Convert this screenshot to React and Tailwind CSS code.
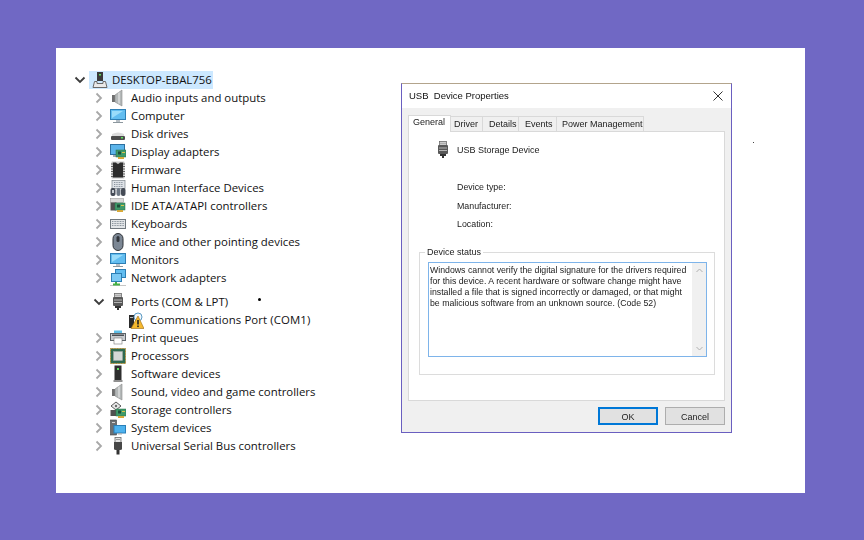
import React from 'react';

// little 16x16 device manager icons
const Speaker = () => (
  <svg width="16" height="18" viewBox="0 0 16 18">
    <rect x="2" y="6" width="3" height="7" fill="#6f6f6f" />
    <path d="M5 6 L12 1 V17 L5 13 Z" fill="#b4b8b8" stroke="#8a8a8a" strokeWidth="0.6" />
    <path d="M9 3.5 V14.5" stroke="#dcdede" strokeWidth="1.5" />
  </svg>
);
const Screen = () => (
  <svg width="16" height="18" viewBox="0 0 16 18">
    <rect x="0.5" y="2.5" width="15" height="10" fill="#62bdf0" stroke="#2d7fb5" />
    <path d="M2 4 H13 L2 11 Z" fill="#9adcfa" />
    <rect x="6" y="13" width="4" height="2" fill="#b8bfc5" />
    <rect x="3" y="15" width="10" height="1" fill="#8c979e" />
  </svg>
);
const Disk = () => (
  <svg width="16" height="18" viewBox="0 0 16 18">
    <path d="M2 9 Q8 6 14 9 V11 H2 Z" fill="#dcdcdc" />
    <rect x="1" y="11" width="14" height="4" rx="1" fill="#4c4c4c" />
    <rect x="11" y="12" width="2" height="1.5" fill="#5fe05f" />
  </svg>
);
const Board = ({ x = 5, y = 8 }) => (
  <g>
    <rect x={x} y={y} width="10" height="7" fill="#3f9a6a" stroke="#2a6f4a" strokeWidth="0.5" />
    <rect x={x + 2} y={y + 1.5} width="3" height="3" fill="#1d4d38" />
    <rect x={x + 6} y={y + 2} width="3" height="1" fill="#d9c24a" />
    <rect x={x + 2} y={y + 7} width="6" height="2" fill="#d7a93a" />
  </g>
);
const DisplayAdapter = () => (
  <svg width="16" height="18" viewBox="0 0 16 18">
    <rect x="0.5" y="1.5" width="14" height="10" fill="#5bb4ea" stroke="#2d6f9f" />
    <rect x="3" y="12" width="5" height="2" fill="#a5adb3" />
    <Board x={6} y={7} />
  </svg>
);
const Chip = () => (
  <svg width="16" height="18" viewBox="0 0 16 18">
    <rect x="2" y="1" width="12" height="16" fill="#e6e6e6" stroke="#8f8f8f" strokeWidth="0.5" />
    <path d="M3 1.5 H6 Q8 4 10 1.5 H13 V16.5 H3 Z" fill="#2c2c2c" />
    <path d="M1 3 H3 M1 5.5 H3 M1 8 H3 M1 10.5 H3 M1 13 H3 M1 15.5 H3 M13 3 H15 M13 5.5 H15 M13 8 H15 M13 10.5 H15 M13 13 H15 M13 15.5 H15" stroke="#555" strokeWidth="0.9" />
  </svg>
);
const Hid = () => (
  <svg width="16" height="18" viewBox="0 0 16 18">
    <rect x="2" y="1.5" width="13" height="8" fill="#dfe3e8" stroke="#7d858c" strokeWidth="0.7" />
    <path d="M4 3.5 H13 M4 5.5 H13 M4 7.5 H13" stroke="#7f8a95" strokeWidth="0.9" strokeDasharray="1 0.7" />
    <rect x="0.5" y="9" width="5" height="8" rx="2" fill="#454b56" />
    <rect x="6.5" y="9" width="4" height="8" rx="2" fill="#6d7784" />
    <rect x="11" y="9" width="4.5" height="8" rx="2" fill="#454b56" />
    <rect x="2" y="11" width="2" height="3" fill="#c7ccd2" />
  </svg>
);
const Ide = () => (
  <svg width="16" height="18" viewBox="0 0 16 18">
    <rect x="0.5" y="1.5" width="13" height="4" fill="#d8d8d8" stroke="#8b8b8b" strokeWidth="0.5" />
    <rect x="0.5" y="5.5" width="6" height="8" fill="#505050" />
    <Board x={5} y={6} />
  </svg>
);
const Keyboard = () => (
  <svg width="16" height="18" viewBox="0 0 16 18">
    <rect x="0.5" y="4.5" width="15" height="9" fill="#e2e5e8" stroke="#70787f" />
    <path d="M2 6.5 H14 M2 8.5 H14 M2 10.5 H14" stroke="#8a949d" strokeWidth="1" strokeDasharray="1 0.6" />
  </svg>
);
const Mouse = () => (
  <svg width="16" height="18" viewBox="0 0 16 18">
    <rect x="3" y="0.5" width="10" height="17" rx="5" fill="#7c8794" stroke="#2f3338" />
    <rect x="6.5" y="3" width="3" height="6" rx="1.5" fill="#30353b" />
  </svg>
);
const Network = () => (
  <svg width="16" height="18" viewBox="0 0 16 18">
    <rect x="5.5" y="0.5" width="10" height="8" fill="#62bdf0" stroke="#2d7fb5" />
    <rect x="1.5" y="4.5" width="10" height="8" fill="#7cc9f4" stroke="#2d7fb5" />
    <path d="M6 13 V15" stroke="#45b045" strokeWidth="2" />
    <path d="M0 16.5 H16" stroke="#c6c6c6" strokeWidth="1" />
    <path d="M3 15.5 H10" stroke="#45b045" strokeWidth="2" />
  </svg>
);
const Port = () => (
  <svg width="16" height="18" viewBox="0 0 16 18">
    <rect x="4.5" y="0.5" width="7" height="4" fill="#e8e8e8" stroke="#6a6a6a" strokeWidth="0.8" />
    <path d="M6 1.5 V3.5 M8 1.5 V3.5 M10 1.5 V3.5" stroke="#777" />
    <rect x="3" y="4" width="10" height="9" rx="1" fill="#585858" />
    <path d="M4 7 H12 M4 9.5 H12" stroke="#b5b5b5" />
    <rect x="5" y="13" width="6" height="2" fill="#333" />
    <rect x="7" y="15" width="2" height="2" fill="#333" />
  </svg>
);
const WarnPort = () => (
  <svg width="16" height="18" viewBox="0 0 16 18">
    <rect x="1" y="4" width="5" height="13" fill="#2b2b2b" />
    <rect x="2" y="6" width="3" height="1" fill="#b8b8b8" />
    <circle cx="10" cy="6" r="4" fill="#f4f8fb" stroke="#5b9ac4" />
    <path d="M10 5 L3 17.5 H16 Z" fill="#f5b82e" stroke="#9c6a12" strokeWidth="0.6" />
    <rect x="9.2" y="9" width="1.6" height="4.5" fill="#222" />
    <rect x="9.2" y="14.5" width="1.6" height="1.6" fill="#222" />
  </svg>
);
const Printer = () => (
  <svg width="16" height="18" viewBox="0 0 16 18">
    <rect x="4" y="1.5" width="8" height="3" fill="#5fc0e8" />
    <rect x="0.5" y="4.5" width="15" height="7" fill="#c8ccd0" stroke="#5d6368" />
    <rect x="2" y="5.5" width="12" height="1.5" fill="#4a4f54" />
    <rect x="4" y="9" width="8" height="6" fill="#fff" stroke="#777" strokeWidth="0.6" />
  </svg>
);
const Cpu = () => (
  <svg width="16" height="18" viewBox="0 0 16 18">
    <rect x="0.5" y="1.5" width="15" height="15" fill="#2f6a50" stroke="#b68a2a" strokeDasharray="1 0.6" />
    <rect x="3.5" y="4.5" width="9" height="9" fill="#d5d8d6" stroke="#a7aaa8" strokeWidth="0.5" />
  </svg>
);
const Tower = () => (
  <svg width="16" height="18" viewBox="0 0 16 18">
    <rect x="4.5" y="0.5" width="7" height="14.5" fill="#2e2e2e" />
    <rect x="7" y="3" width="2" height="2" fill="#5ee05e" />
    <rect x="3.5" y="15" width="9" height="2" fill="#8f8f8f" />
  </svg>
);
const StorageCtl = () => (
  <svg width="16" height="18" viewBox="0 0 16 18">
    <path d="M6 1 L11 5 L6 9 L1 5 Z" fill="#e8e8e8" stroke="#4a4a4a" strokeWidth="0.9" />
    <circle cx="6" cy="5" r="1.2" fill="#6a6a6a" />
    <rect x="0.5" y="9" width="8" height="6" fill="#505050" />
    <Board x={6} y={8} />
  </svg>
);
const SystemDev = () => (
  <svg width="16" height="18" viewBox="0 0 16 18">
    <rect x="0.5" y="1" width="6" height="15" fill="#6c6f72" stroke="#3d3f41" strokeWidth="0.6" />
    <rect x="2" y="3" width="3" height="1" fill="#d2d2d2" />
    <rect x="4" y="6.5" width="11.5" height="7.5" fill="#4db2ee" stroke="#2a7fb8" />
    <rect x="8" y="14" width="4" height="1.5" fill="#a9b2b8" />
  </svg>
);
const UsbPlug = () => (
  <svg width="16" height="18" viewBox="0 0 16 18">
    <rect x="5" y="0.5" width="6" height="5" fill="#e3e3e3" stroke="#6a6a6a" strokeWidth="0.8" />
    <rect x="6.5" y="2" width="1" height="1" fill="#555" />
    <rect x="8.5" y="2" width="1" height="1" fill="#555" />
    <path d="M4 5 H12 V12 Q12 13 10 13 H6 Q4 13 4 12 Z" fill="#474747" />
    <rect x="6.5" y="13" width="3" height="4.5" fill="#333" />
  </svg>
);
const Desktop = () => (
  <svg width="16" height="18" viewBox="0 0 16 18">
    <rect x="5" y="1" width="6" height="9" fill="#3a3a3a" />
    <rect x="7" y="3" width="2" height="1.5" fill="#5ee05e" />
    <path d="M2.5 10.5 H5 V12.5 H11 V10.5 H13.5 L15 16.5 H1 Z" fill="#e9e9e9" stroke="#6a6a6a" />
  </svg>
);

const Chevron = ({ open }) =>
  open ? (
    <svg width="12" height="12" viewBox="0 0 12 12" fill="none"><path d="M1.5 3.5 L6 8 L10.5 3.5" stroke="#3c3c3c" strokeWidth="1.8" /></svg>
  ) : (
    <svg width="12" height="12" viewBox="0 0 12 12" fill="none"><path d="M3.5 1.5 L8 6 L3.5 10.5" stroke="#a8a8a8" strokeWidth="1.8" /></svg>
  );

const rows = [
  ['Audio inputs and outputs', Speaker],
  ['Computer', Screen],
  ['Disk drives', Disk],
  ['Display adapters', DisplayAdapter],
  ['Firmware', Chip],
  ['Human Interface Devices', Hid],
  ['IDE ATA/ATAPI controllers', Ide],
  ['Keyboards', Keyboard],
  ['Mice and other pointing devices', Mouse],
  ['Monitors', Screen],
  ['Network adapters', Network],
];
const rowsAfter = [
  ['Print queues', Printer],
  ['Processors', Cpu],
  ['Software devices', Tower],
  ['Sound, video and game controllers', Speaker],
  ['Storage controllers', StorageCtl],
  ['System devices', SystemDev],
  ['Universal Serial Bus controllers', UsbPlug],
];

function TreeRow({ label, Icon, open }) {
  return (
    <div className="flex items-center h-[18px] pl-[34px]">
      <span className="w-[18px] flex justify-center shrink-0"><Chevron open={open} /></span>
      <span className="w-[16px] ml-[2px] shrink-0 flex"><Icon /></span>
      <span className="ml-[5px] whitespace-nowrap">{label}</span>
    </div>
  );
}

function Tree() {
  return (
    <div className="w-[345px] shrink-0 pt-[23px] text-[#111] text-[11.4px] font-['Open_Sans',sans-serif]">
      <div className="flex items-center h-[18px] pl-[18px]">
        <span className="w-[12px] flex justify-center shrink-0"><Chevron open /></span>
        <span className="ml-[3px] flex items-center h-[18px] w-[124px] bg-[#cce8ff]">
          <span className="w-[16px] ml-[3px] shrink-0 flex"><Desktop /></span>
          <span className="ml-[4px] whitespace-nowrap">DESKTOP-EBAL756</span>
        </span>
      </div>
      {rows.map(([label, Icon]) => <TreeRow key={label} label={label} Icon={Icon} />)}
      <div className="mt-[6px]"><TreeRow label="Ports (COM & LPT)" Icon={Port} open /></div>
      <div className="flex items-center h-[18px] pl-[72px]">
        <span className="w-[16px] shrink-0 flex"><WarnPort /></span>
        <span className="ml-[6px] whitespace-nowrap tracking-[0.1px]">Communications Port (COM1)</span>
      </div>
      {rowsAfter.map(([label, Icon]) => <TreeRow key={label} label={label} Icon={Icon} />)}
    </div>
  );
}

function Dialog() {
  const tabs = [
    ['Driver', 'w-[32px] pl-[3px]'],
    ['Details', 'w-[36px] pl-[6px]'],
    ['Events', 'w-[38px] pl-[6px]'],
    ['Power Management', 'w-[87px] pl-[5px]'],
  ];
  return (
    <div className="mt-[35px] w-[331px] h-[350px] flex flex-col bg-[#f0f0f0] border border-[#6a5fc0] border-t-[#b3a48c] text-[#222] text-[9px] leading-[11px] font-['Liberation_Sans',sans-serif] blur-[0.35px]">
      <div className="h-[24px] bg-white flex items-center justify-between pl-[7px] pr-[8px] pb-[1px] shrink-0">
        <span className="text-[9.5px] text-[#111]">USB{'\u00a0'} Device Properties</span>
        <svg width="10" height="10" viewBox="0 0 10 10"><path d="M0.5 0.5 L9.5 9.5 M9.5 0.5 L0.5 9.5" stroke="#333" strokeWidth="1" /></svg>
      </div>
      <div className="flex items-end h-[23px] pl-[6px] shrink-0">
        <div className="w-[43px] h-[17px] mb-[-1px] bg-white border border-b-0 border-[#d9d9d9] pl-[4px] pt-[1px] relative z-10">General</div>
        {tabs.map(([t, w]) => (
          <div key={t} className={`${w} h-[15px] border border-b-0 border-l-0 border-[#d9d9d9] flex items-center whitespace-nowrap`}>{t}</div>
        ))}
      </div>
      <div className="mx-[6px] h-[270px] bg-white border border-[#d9d9d9] flex flex-col pl-[26px] shrink-0">
        <div className="flex items-center mt-[10px] h-[16px]">
          <Port />
          <span className="ml-[6px]">USB Storage Device</span>
        </div>
        <div className="pl-[22px] mt-[24px] flex flex-col gap-[7.5px] text-[8.85px]">
          <div>Device type:</div>
          <div>Manufacturer:</div>
          <div>Location:</div>
        </div>
        <div className="relative -ml-[16px] mt-[22px] w-[296px] h-[123px] border border-[#dcdcdc] pl-[8px] pt-[9px]">
          <span className="absolute -top-[6px] left-[5px] bg-white px-[2px]">Device status</span>
          <div className="w-[279px] h-[95px] border border-[#7eb4ea] flex">
            <div className="flex-1 pl-[1px] pt-[2px] text-[8.75px]">
              <p className="whitespace-nowrap">Windows cannot verify the digital signature for the drivers required</p>
              <p className="whitespace-nowrap">for this device. A recent hardware or software change might have</p>
              <p className="whitespace-nowrap">installed a file that is signed incorrectly or damaged, or that might</p>
              <p className="whitespace-nowrap">be malicious software from an unknown source. (Code 52)</p>
            </div>
            <div className="w-[14px] bg-[#f0f0f0] flex flex-col justify-between items-center py-[5px]">
              <svg width="7" height="5" viewBox="0 0 7 5" fill="none"><path d="M0.5 4 L3.5 1 L6.5 4" stroke="#b0b0b0" /></svg>
              <svg width="7" height="5" viewBox="0 0 7 5" fill="none"><path d="M0.5 1 L3.5 4 L6.5 1" stroke="#b0b0b0" /></svg>
            </div>
          </div>
        </div>
      </div>
      <div className="flex justify-end gap-[7px] pr-[6px] mt-[6px]">
        <button className="w-[60px] h-[18px] pt-[2px] bg-[#e1e1e1] border-2 border-[#0078d7] flex items-center justify-center text-[#222]">OK</button>
        <button className="w-[60px] h-[18px] pt-[2px] bg-[#e1e1e1] border border-[#adadad] flex items-center justify-center text-[#222]">Cancel</button>
      </div>
    </div>
  );
}

export default function App() {
  return (
    <div className="w-[864px] h-[540px] bg-[#7068c4] pt-[48px] pl-[56px]">
      <div className="relative w-[749px] h-[445px] bg-white flex">
        <Tree />
        <Dialog />
        <span className="absolute left-[202px] top-[250px] w-[3px] h-[3px] rounded-full bg-black" />
        <span className="absolute left-[697px] top-[94px] w-px h-px bg-[#444]" />
      </div>
    </div>
  );
}
